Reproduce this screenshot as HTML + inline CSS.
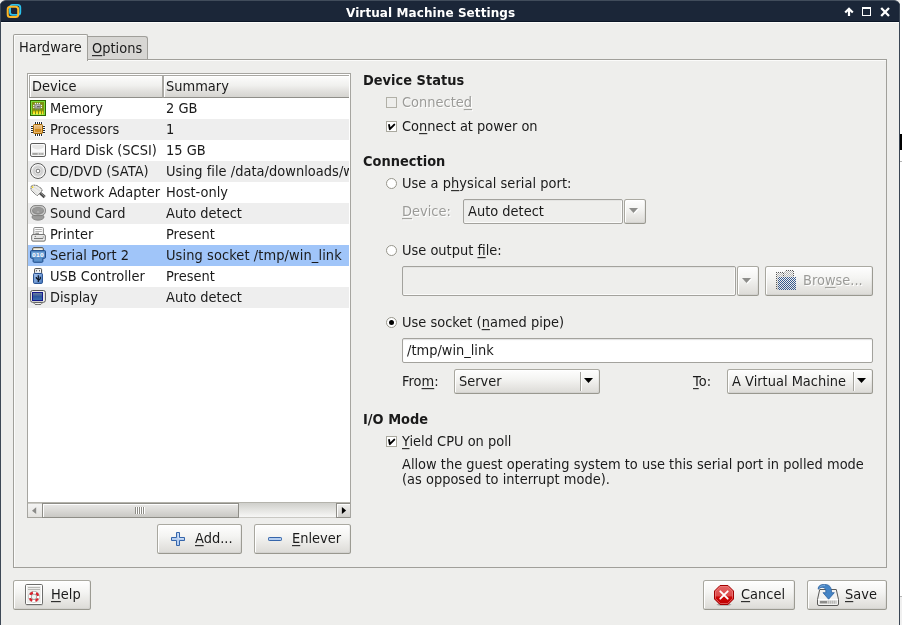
<!DOCTYPE html>
<html><head><meta charset="utf-8"><title>Virtual Machine Settings</title>
<style>
*{box-sizing:border-box;margin:0;padding:0}
html,body{width:902px;height:625px;overflow:hidden;background:#fff}
body{font-family:"DejaVu Sans","Liberation Sans",sans-serif;font-size:13px;color:#1a1a1a;position:relative}
#win{position:absolute;left:0;top:0;width:900px;height:625px;background:#eeeeec;overflow:hidden}
#bl{position:absolute;left:0;top:4px;width:1px;height:621px;background:#3d4856}
#br{position:absolute;left:899px;top:4px;width:1px;height:621px;background:#3a4554}
#title{position:absolute;left:0;top:0;width:900px;height:22px;background:#1b2638;border-top:1px solid #414c5b;border-bottom:1px solid #0a1526;border-radius:6px 6px 0 0}
#hl{position:absolute;left:1px;top:22px;width:898px;height:1px;background:#fcfcfa}
#title .t{position:absolute;left:346px;top:5px;font-size:12px;font-weight:bold;color:#fff;line-height:14px;white-space:nowrap;letter-spacing:.09px;transform:scaleY(1.0001)}
u{text-decoration:underline;text-underline-offset:1.5px;text-decoration-thickness:1px}
.t13{position:absolute;line-height:16px;white-space:nowrap;transform-origin:0 12px;transform:scaleY(1.055)}
.b{font-weight:bold}
.dis{color:#9b9b98;text-shadow:1px 1px 0 #fff}
.btn{position:absolute;border:1px solid;border-color:#aaa9a1 #9c9b93 #99988f #a8a79f;border-radius:2.500px;background:linear-gradient(#fefefe,#f4f4f2 40%,#e8e7e4 70%,#dcdbd7);box-shadow:inset 1px 1px 0 #fff,inset -1px -1px 0 rgba(120,120,110,.08)}
.btn svg{position:absolute}
.sep{position:absolute;top:2px;width:2px;height:19px;background:linear-gradient(90deg,#a3a29c 50%,#fdfdfd 50%)}
#nb{position:absolute;left:13px;top:59px;width:874px;height:509px;border:1px solid #a09f9a;box-shadow:inset 1px 1px 0 #fbfbfa}
#tab1{position:absolute;left:13px;top:34px;width:75px;height:27px;border:1px solid #a09f9a;border-bottom:none;border-radius:2px 2px 0 0;background:#eeeeec;box-shadow:inset 1px 1px 0 #fbfbfa}
#tab2{position:absolute;left:88px;top:36px;width:60px;height:23px;border:1px solid #a09f9a;border-left:none;border-bottom:none;border-radius:0 3px 0 0;background:#d7d6d3}
#list{position:absolute;left:27px;top:73px;width:324px;height:445px;border:1px solid #a6a5a0;border-bottom:none;background:#fff;overflow:hidden}
#list .hd{position:absolute;top:1px;height:23px;border:1px solid #a9a8a3;border-bottom-color:#8f8e89;background:linear-gradient(#fdfdfc,#f0f0ee 45%,#e0dfdc 75%,#d5d4d0);box-shadow:inset 1px 1px 0 #fff}
#list .hd span{position:absolute;left:2px;top:3px;line-height:16px;transform-origin:0 12px;transform:scaleY(1.055)}
.row{position:absolute;left:0;width:322px;height:21px}
.row.g{background:#eeeeee;width:321px}
.row.sel{background:#a0c5f9;width:321px}
.row .n{position:absolute;left:22px;top:3px;line-height:16px;white-space:nowrap;transform-origin:0 12px;transform:scaleY(1.055)}
.row .s{position:absolute;left:138px;top:3px;line-height:16px;transform-origin:0 12px;transform:scaleY(1.055);white-space:nowrap;width:183px;overflow:hidden}
.row svg{position:absolute;left:2px;top:2px}
.cb{position:absolute;width:11px;height:11px;border:1px solid #a9a89e;background:#fff}
.cb svg,.rb i{position:absolute;left:0;top:0}
.rb{position:absolute;width:11px;height:11px;border:1px solid #97968c;border-radius:50%;background:#fff}
.rb i{left:2px;top:2px;width:5px;height:5px;border-radius:50%;background:#000}
.entry{position:absolute;border:1px solid #a3a29d;border-radius:2px;background:#fff;box-shadow:inset 0 1px 1px rgba(0,0,0,.12)}
#sb{position:absolute;left:0;top:428px;width:322px;height:16px;background:linear-gradient(#b4b3ac 0,#b4b3ac 1px,#cfcfcb 1px,#e4e4e1 8px,#f7f7f6 15px,#c9c8c3 15px)}
#sb .l{position:absolute;left:0;top:1px;width:15px;height:15px;background:linear-gradient(#f4f4f3,#e3e2df);border-right:1px solid #8e8d87;border-top:1px solid #c9c8c3;border-bottom:1px solid #a5a49e}
#sb .th{position:absolute;left:14px;top:1px;width:197px;height:15px;border:1px solid #8e8d87;background:linear-gradient(#e9e9e7,#dad9d6 50%,#c9c8c4);box-shadow:inset 1px 1px 0 #fdfdfd}
#sb .r{position:absolute;left:308px;top:1px;width:15px;height:15px;border:1px solid #8e8d87;background:linear-gradient(#f0f0ee,#dddcd9 60%,#d2d1cd);box-shadow:inset 1px 1px 0 #fdfdfd}
#sb svg{position:absolute}
</style></head><body>
<div style="position:absolute;left:900px;top:134px;width:2px;height:16px;background:#000;border-radius:0 0 0 0"></div>
<div style="position:absolute;left:900px;top:596px;width:2px;height:29px;background:#f0f0f0;border-top:1px solid #b5b5b5"></div>
<div style="position:absolute;left:900px;top:161px;width:2px;height:1px;background:#b5b5b5"></div>
<div id="win">
 <div id="title"><span class="t">Virtual Machine Settings</span>
  <svg style="position:absolute;left:5px;top:2px" width="18" height="18" viewBox="0 0 18 18"><rect x="5" y="1.800" width="10.300" height="10.100" rx="2.600" fill="none" stroke="#2cc1ec" stroke-width="1.800"/><rect x="2.700" y="3.700" width="10.500" height="10.400" rx="2.600" fill="none" stroke="#fdb827" stroke-width="2"/><path d="M5 9.500V5" stroke="#2cc1ec" stroke-width="1.800"/></svg>
  <svg style="position:absolute;left:843px;top:3px" width="50" height="14" viewBox="0 0 50 14"><path d="M6 12.100V5M2.200 8.500L6 4.700l3.800 3.800" fill="none" stroke="#fff" stroke-width="2.200" stroke-linejoin="miter"/><path d="M19 3h9v9h-9z" fill="#fff"/><rect x="20" y="5" width="7" height="6" fill="#1b2638"/><path d="M38.200 4l7.800 8M46 4l-7.800 8" stroke="#fff" stroke-width="2.300"/></svg>
 </div><div id="hl"></div>
 <div id="nb"></div>
 <div id="tab2"><span class="t13" style="left:4px;top:4px"><u>O</u>ptions</span></div>
 <div id="tab1"><span class="t13" style="left:5px;top:5px">Har<u>d</u>ware</span></div>
 <div id="list">
  <div class="hd" style="left:1px;width:134px"><span>Device</span></div>
  <div class="hd" style="left:135px;width:186px;border-right:none"><span>Summary</span></div>
  <div class="row" style="top:24px"><svg width="16" height="16" viewBox="0 0 16 16"><defs><linearGradient id="my" x1="0" y1="0" x2="0" y2="1"><stop offset="0" stop-color="#a9a008"/><stop offset=".4" stop-color="#f3de12"/><stop offset="1" stop-color="#fff453"/></linearGradient></defs><rect x=".5" y=".5" width="15" height="15" fill="#7d9210" stroke="#2f6400"/><rect x="1.500" y="1.500" width="13" height="13" fill="none" stroke="#7fe03c"/><path d="M3 10.500h2v4.100h-2zM6 10.500h2v4.100h-2zM9 10.500h2v4.100h-2zM12 10.500h1.300v4.100h-1.300z" fill="url(#my)"/><rect x="4.400" y="4" width="6.400" height="4.800" rx="1" fill="#8f8f8d"/><path d="M5.400 3.500h.01M7.400 3.500h.01M9.400 3.500h.01M3.700 5.500h.01M3.700 7.500h.01M11.500 5.500h.01M11.500 7.500h.01" stroke="#f3f3f3" stroke-width="1.300" stroke-linecap="round"/><path d="M5.400 9.200h.01M7.400 9.200h.01M9.400 9.200h.01" stroke="#777" stroke-width="1.100" stroke-linecap="round"/><rect x="5.600" y="5.200" width="4.300" height="2.400" rx=".5" fill="#c3c3c1"/><rect x="6.800" y="6.200" width="3" height="1" fill="#505050"/></svg><span class="n">Memory</span><span class="s">2 GB</span></div>
  <div class="row g" style="top:45px"><svg width="16" height="16" viewBox="0 0 16 16"><defs><linearGradient id="cpg" x1="0" y1="0" x2="0" y2="1"><stop offset="0" stop-color="#eec589"/><stop offset=".48" stop-color="#e3ad5e"/><stop offset=".52" stop-color="#d08a1c"/><stop offset="1" stop-color="#d9952e"/></linearGradient></defs><path d="M5.500 .6v14.800M7.500 .6v14.800M9.500 .6v14.800M11.500 .6v14.800M.6 5.500h14.800M.6 7.500h14.800M.6 9.500h14.800M.6 11.500h14.800" stroke="#fff" stroke-width="1.900"/><path d="M5.500 1v14M7.500 1v14M9.500 1v14M11.500 1v14M1 5.500h14M1 7.500h14M1 9.500h14M1 11.500h14" stroke="#1f2b38" stroke-width="1"/><rect x="3.500" y="3.500" width="9" height="9" rx="1" fill="url(#cpg)" stroke="#a46600"/><rect x="4.500" y="4.500" width="7" height="7" fill="none" stroke="#f2d4a6" stroke-width=".8" opacity=".7"/></svg><span class="n">Processors</span><span class="s">1</span></div>
  <div class="row" style="top:66px"><svg width="16" height="16" viewBox="0 0 16 16"><rect x=".5" y="1.500" width="15" height="13" rx="1.600" fill="#fafafa" stroke="#5b5b5a"/><path d="M2.300 3H13.700V5.500Q8 9.500 2.300 5.500Z" fill="#e7e7e6"/><rect x="2" y="10.500" width="12" height="2.600" fill="#d2d2d0"/><rect x="2.600" y="11" width="5" height="1.800" fill="#a3a3a1"/><path d="M9.600 11v1.800M11.100 11v1.800M12.600 11v1.800" stroke="#9d9d9b" stroke-width=".8"/></svg><span class="n">Hard Disk (SCSI)</span><span class="s">15 GB</span></div>
  <div class="row g" style="top:87px"><svg width="16" height="16" viewBox="0 0 16 16"><defs><radialGradient id="cdg"><stop offset="0" stop-color="#fff"/><stop offset=".3" stop-color="#f4f4f4"/><stop offset=".5" stop-color="#cdcdcd"/><stop offset=".72" stop-color="#dcdcdc"/><stop offset=".85" stop-color="#fafafa"/><stop offset="1" stop-color="#fff"/></radialGradient></defs><circle cx="8" cy="8" r="7.500" fill="url(#cdg)" stroke="#5c5c5b" stroke-width="1"/><circle cx="8" cy="8" r="1.900" fill="#fff" stroke="#5e5e5d" stroke-width=".9"/></svg><span class="n">CD/DVD (SATA)</span><span class="s" style="letter-spacing:.03px">Using file /data/downloads/w</span></div>
  <div class="row" style="top:108px"><svg width="16" height="16" viewBox="0 0 16 16"><path d="M9.500 8.500L14.700 13.200" stroke="#4a4a49" stroke-width="3"/><path d="M10 8.300L15 12.800" stroke="#8e8e8c" stroke-width="1"/><path d="M1 2.500L3 1L7 1.500L12 5V7L7.500 11.500L6 11L1 6Z" fill="#ececea" stroke="#555554" stroke-width=".9" stroke-dasharray="1.200 .5"/><path d="M2.500 5L7 9.500M4 3L10 7" stroke="#dadad8" stroke-width=".9"/><rect x="1.800" y="2.300" width="1.500" height="1.700" fill="#f2d520"/></svg><span class="n">Network Adapter</span><span class="s">Host-only</span></div>
  <div class="row g" style="top:129px"><svg width="16" height="16" viewBox="0 0 16 16"><ellipse cx="8" cy="12" rx="6" ry="3.200" fill="#9c9c9b" stroke="#7c7c7b" stroke-width=".8"/><rect x=".5" y=".6" width="15" height="10" rx="4.500" fill="#c9c9c8" stroke="#787877" stroke-width=".9"/><ellipse cx="8" cy="5.800" rx="6" ry="3.900" fill="#8b8b8a"/><ellipse cx="8" cy="5.300" rx="5" ry="2.800" fill="#999998"/><path d="M6.500 7.500L8 6L9.500 7.500Z" fill="#bdbdbc"/></svg><span class="n">Sound Card</span><span class="s">Auto detect</span></div>
  <div class="row" style="top:150px"><svg width="16" height="16" viewBox="0 0 16 16"><rect x="3.800" y="1.500" width="9.600" height="8" rx="1" fill="#fbfbfb" stroke="#8a8a89"/><path d="M5.300 3.500H11.800M5.300 5.500H11.800" stroke="#b3b3b2" stroke-width="1"/><path d="M5.300 7.300H9" stroke="#8c8c8b" stroke-width="1.200"/><rect x="1.700" y="8.600" width="13.600" height="6.500" rx="1.300" fill="#f6f6f5" stroke="#676766"/><rect x="3.500" y="10" width="9.500" height="3.800" fill="#e2e2e1"/><rect x="4" y="12" width="9" height="1" fill="#777776"/><circle cx="5.300" cy="10.400" r=".6" fill="#777"/><path d="M13.300 10v2.500" stroke="#999" stroke-width=".8"/></svg><span class="n">Printer</span><span class="s">Present</span></div>
  <div class="row sel" style="top:171px"><svg width="16" height="16" viewBox="0 0 16 16"><rect x="2.700" y=".7" width="10.600" height="3.500" rx="1" fill="#f3f0e4" stroke="#4b4437"/><path d="M1.500 3.600H14.500A1 1 0 0 1 15.500 4.600V10.300A1 1 0 0 1 14.500 11.300H12.900V14.300A1 1 0 0 1 11.900 15.300H4.100A1 1 0 0 1 3.100 14.300V11.300H1.500A1 1 0 0 1 .5 10.300V4.600A1 1 0 0 1 1.500 3.600Z" fill="#4d86c2" stroke="#214d8b" stroke-width="1"/><rect x="1.700" y="4.800" width="12.600" height="5.500" fill="#7eaadb" opacity=".75"/><rect x="4.300" y="11.500" width="7.400" height="2.700" fill="#6a9bd0" opacity=".6"/><text x="8.100" y="9.600" font-family="DejaVu Sans,Liberation Sans,sans-serif" font-weight="bold" font-size="5.400" fill="#f4f8fd" text-anchor="middle" letter-spacing=".25">010</text></svg><span class="n">Serial Port 2</span><span class="s" style="letter-spacing:.09px">Using socket /tmp/win_link</span></div>
  <div class="row" style="top:192px"><svg width="16" height="16" viewBox="0 0 16 16"><defs><linearGradient id="ug" x1="0" y1="0" x2="1" y2="1"><stop offset="0" stop-color="#a9c6ee"/><stop offset="1" stop-color="#4a7cc2"/></linearGradient></defs><rect x="4.600" y=".6" width="7" height="5" rx=".8" fill="#fbfbfb" stroke="#474746"/><rect x="6.100" y="2.100" width="1" height="1.300" fill="#555"/><rect x="9" y="2.100" width="1" height="1.300" fill="#555"/><rect x="3.600" y="5.400" width="8.800" height="10" rx=".8" fill="url(#ug)" stroke="#1f4a8d"/><path d="M8.300 14V7.300M8.300 11.800L6.300 10V9M8.300 12.500l2-1.800V8.800" stroke="#0d1626" stroke-width="1.200" fill="none"/></svg><span class="n">USB Controller</span><span class="s">Present</span></div>
  <div class="row g" style="top:213px"><svg width="16" height="16" viewBox="0 0 16 16"><defs><linearGradient id="dg" x1="0" y1="0" x2="0" y2="1"><stop offset="0" stop-color="#74839f"/><stop offset=".5" stop-color="#2d579c"/><stop offset="1" stop-color="#3a6fb5"/></linearGradient></defs><ellipse cx="8" cy="14.400" rx="3.800" ry="1.300" fill="#f4f4f3" stroke="#555554" stroke-width=".9"/><rect x=".6" y="1.500" width="14.800" height="11.800" rx="2" fill="#f1f1ee" stroke="#555554"/><rect x="2.500" y="3.500" width="10" height="8" fill="url(#dg)" stroke="#141a8c" stroke-width="1"/><path d="M14 4.500v.8M14 6.500v.8M14 8.500v.8" stroke="#cfcfcd" stroke-width=".9"/></svg><span class="n">Display</span><span class="s">Auto detect</span></div>
  <div id="sb"><div class="l"><svg style="left:4px;top:3px" width="5" height="8" viewBox="0 0 5 8"><path d="M4.200 .2V7.100L0 3.650Z" fill="#8b8b88"/></svg></div><div class="th"><svg style="left:92px;top:3px" width="10" height="7" viewBox="0 0 10 7"><path d="M.5 0v7M2.500 0v7M4.500 0v7M6.500 0v7M8.500 0v7" stroke="#8c8b85"/><path d="M1.500 0v7M3.500 0v7M5.500 0v7M7.500 0v7M9.500 0v7" stroke="#fff"/></svg></div><div class="r"><svg style="left:4px;top:3px" width="6" height="8" viewBox="0 0 6 8"><path d="M.9 0V6.900L5.100 3.450Z" fill="#000"/></svg></div></div>
 </div>

 <span class="t13 b" style="left:363px;top:73px">Device Status</span>
 <div class="cb" style="left:386px;top:97px;border-color:#b1b0a7;background:#eeeeec"></div>
 <span class="t13 dis" style="left:402px;top:95px">Connecte<u>d</u></span>
 <div class="cb" style="left:386px;top:121px"><svg width="9" height="9" viewBox="0 0 9 9"><path d="M2.100 3L2.800 7.200L7.300 2.600" fill="none" stroke="#000" stroke-width="1.900" stroke-linecap="round" stroke-linejoin="round"/></svg></div>
 <span class="t13" style="left:402px;top:119px">Co<u>n</u>nect at power on</span>

 <span class="t13 b" style="left:363px;top:154px">Connection</span>
 <div class="rb" style="left:386px;top:178px"></div>
 <span class="t13" style="left:402px;top:176px;letter-spacing:.04px">Use a p<u>h</u>ysical serial port:</span>
 <span class="t13 dis" style="left:402px;top:204px"><u>D</u>evice:</span>
 <div class="entry" style="left:463px;top:199px;width:160px;height:25px;background:#eeeeec;box-shadow:inset -1px -1px 0 #fbfbfa,inset 0 1px 0 rgba(0,0,0,.04)"><span class="t13" style="left:4px;top:4px">Auto detect</span></div>
 <div class="btn" style="left:624px;top:199px;width:22px;height:25px"><svg style="left:4px;top:8px" width="10" height="6" viewBox="0 0 10 6"><path d="M1 1H10L5.500 6Z" fill="#fff"/><path d="M0 0H9L4.500 5Z" fill="#8d8d8a"/></svg></div>

 <div class="rb" style="left:386px;top:245px"></div>
 <span class="t13" style="left:402px;top:243px">Use output <u>f</u>ile:</span>
 <div class="entry" style="left:402px;top:266px;width:334px;height:30px;background:#eeeeec;box-shadow:inset -1px -1px 0 #fbfbfa,inset 0 1px 0 rgba(0,0,0,.04)"></div>
 <div class="btn" style="left:737px;top:266px;width:22px;height:30px"><svg style="left:4px;top:11px" width="10" height="6" viewBox="0 0 10 6"><path d="M1 1H10L5.500 6Z" fill="#fff"/><path d="M0 0H9L4.500 5Z" fill="#8d8d8a"/></svg></div>
 <div class="btn" style="left:765px;top:266px;width:108px;height:30px"><svg style="left:10px;top:3px" width="22" height="22" viewBox="0 0 22 22" shape-rendering="crispEdges"><defs><pattern id="pk" width="2" height="2" patternUnits="userSpaceOnUse"><rect width="1" height="1" fill="#555"/><rect x="1" y="1" width="1" height="1" fill="#555"/></pattern><pattern id="pg" width="2" height="2" patternUnits="userSpaceOnUse"><rect width="1" height="1" fill="#b4b4b2"/><rect x="1" y="1" width="1" height="1" fill="#b4b4b2"/></pattern><pattern id="pb" width="2" height="2" patternUnits="userSpaceOnUse"><rect width="1" height="1" fill="#35598f"/><rect x="1" y="1" width="1" height="1" fill="#35598f"/></pattern></defs><rect x="0" y="2" width="8" height="18" fill="url(#pg)"/><path d="M0 2H8V3H1V20H0Z" fill="url(#pk)"/><rect x="8" y="1" width="10" height="7" fill="url(#pg)"/><path d="M7 6V2L9 0H16L18 2V7H17V3L15.500 1H9.500L8 3V6Z" fill="url(#pk)"/><rect x="2" y="7" width="18" height="13" fill="url(#pb)"/></svg><span class="t13 dis" style="left:37px;top:6px">Bro<u>w</u>se...</span></div>

 <div class="rb" style="left:386px;top:317px"><i></i></div>
 <span class="t13" style="left:402px;top:315px">Use socket (<u>n</u>amed pipe)</span>
 <div class="entry" style="left:402px;top:338px;width:471px;height:25px"><span class="t13" style="left:4px;top:4px">/tmp/win_link</span></div>
 <span class="t13" style="left:402px;top:374px">Fro<u>m</u>:</span>
 <div class="btn" style="left:454px;top:369px;width:146px;height:25px"><span class="t13" style="left:4px;top:4px">Server</span><i class="sep" style="left:125px"></i><svg style="left:129px;top:8px" width="9" height="5" viewBox="0 0 9 5"><path d="M0 0H9L4.500 5Z" fill="#000"/></svg></div>
 <span class="t13" style="left:693px;top:374px"><u>T</u>o:</span>
 <div class="btn" style="left:727px;top:369px;width:146px;height:25px"><span class="t13" style="left:4px;top:4px">A Virtual Machine</span><i class="sep" style="left:125px"></i><svg style="left:129px;top:8px" width="9" height="5" viewBox="0 0 9 5"><path d="M0 0H9L4.500 5Z" fill="#000"/></svg></div>

 <span class="t13 b" style="left:363px;top:412px">I/O Mode</span>
 <div class="cb" style="left:386px;top:436px"><svg width="9" height="9" viewBox="0 0 9 9"><path d="M2.100 3L2.800 7.200L7.300 2.600" fill="none" stroke="#000" stroke-width="1.900" stroke-linecap="round" stroke-linejoin="round"/></svg></div>
 <span class="t13" style="left:402px;top:434px"><u>Y</u>ield CPU on poll</span>
 <span class="t13" style="left:402px;top:457px">Allow the guest operating system to use this serial port in polled mode</span>
 <span class="t13" style="left:402px;top:472px">(as opposed to interrupt mode).</span>

 <div class="btn" style="left:157px;top:524px;width:85px;height:30px"><svg style="left:13px;top:7px" width="14" height="14" viewBox="0 0 14 14"><path d="M5.500 .5H8.500V5.500H13.500V8.500H8.500V13.500H5.500V8.500H.5V5.500H5.500Z" fill="#b5cef0" stroke="#3565aa" stroke-linejoin="round"/><path d="M6.500 1.500H7.500V6.500H12.500" stroke="#d6e4f7" stroke-width=".7" fill="none"/></svg><span class="t13" style="left:37px;top:6px"><u>A</u>dd...</span></div>
 <div class="btn" style="left:254px;top:524px;width:97px;height:30px"><svg style="left:13px;top:12px" width="14" height="4" viewBox="0 0 14 4"><rect x=".5" y=".5" width="13" height="3" rx=".7" fill="#b5cef0" stroke="#3565aa"/></svg><span class="t13" style="left:37px;top:6px"><u>E</u>nlever</span></div>
 <div class="btn" style="left:13px;top:580px;width:78px;height:30px"><svg style="left:11px;top:3px" width="19" height="22" viewBox="0 0 19 22"><rect x="1" y="19.500" width="17" height="2" rx="1" fill="#000" opacity=".18"/><rect x=".5" y=".5" width="17" height="20" rx="1.200" fill="#fff" stroke="#6d6d6b"/><rect x="2" y="2" width="14" height="17" fill="#ededeb"/><path d="M3 3.500H15M3 5.500H15" stroke="#b9b9b6"/><circle cx="9" cy="12.800" r="5.700" fill="#8f8f8c"/><circle cx="9" cy="12.800" r="4.150" fill="none" stroke="#fff" stroke-width="2.500"/><circle cx="9" cy="12.800" r="4.150" fill="none" stroke="#d9232e" stroke-width="2.500" stroke-dasharray="3.260 3.260" stroke-dashoffset="-1.630"/><circle cx="9" cy="12.800" r="2.700" fill="#f4f4f3" stroke="#8f8f8c" stroke-width=".7"/></svg><span class="t13" style="left:37px;top:6px"><u>H</u>elp</span></div>
 <div class="btn" style="left:703px;top:580px;width:92px;height:30px"><svg style="left:10px;top:4px" width="20" height="21" viewBox="0 0 20 21"><defs><linearGradient id="cg" x1="0" y1="0" x2="0" y2="1"><stop offset="0" stop-color="#e46464"/><stop offset=".55" stop-color="#dc4a4a"/><stop offset=".6" stop-color="#cc0606"/><stop offset="1" stop-color="#c00000"/></linearGradient></defs><ellipse cx="10" cy="19.600" rx="7.500" ry="1.200" fill="#000" opacity=".25"/><path d="M6 .5H14L19.500 6V14L14 19.500H6L.5 14V6Z" fill="url(#cg)" stroke="#a20000"/><path d="M6.400 1.500H13.600L18.500 6.400V13.600L13.600 18.500H6.400L1.500 13.600V6.400Z" fill="none" stroke="#f08585" stroke-width=".8" opacity=".8"/><path d="M6.300 6.300L13.700 13.700M13.700 6.300L6.300 13.700" stroke="#fff" stroke-width="1.900" stroke-linecap="round"/></svg><span class="t13" style="left:37px;top:6px"><u>C</u>ancel</span></div>
 <div class="btn" style="left:807px;top:580px;width:80px;height:30px"><svg style="left:9px;top:3px" width="23" height="23" viewBox="0 0 23 23"><path d="M2.700 5.500H19.300L21.500 15.500V20A1.500 1.500 0 0 1 20 21.500H2A1.500 1.500 0 0 1 .5 20V15.500Z" fill="#f3f3f2" stroke="#5a5a58" stroke-linejoin="round"/><path d="M1 15.500H21" stroke="#fff"/><rect x="2.500" y="16.500" width="17.500" height="3.300" fill="#d0d0ce"/><rect x="3" y="17" width="7" height="2.300" fill="#8c8c8a"/><path d="M11.500 16.800v2.800M13.500 16.800v2.800M15.500 16.800v2.800M17.500 16.800v2.800" stroke="#b0b0ae" stroke-width=".8"/><path d="M1.200 5.200C1 1.800 3.800 .4 7.500 .4C12.500 .4 14.600 3.200 14.600 8.700H17.300L11.600 15.200L6 8.700H8.900C8.900 5.200 8 3.400 5.600 3.400C3.600 3.400 2.500 4 1.200 5.200Z" fill="#4585c6" stroke="#2d62a0" stroke-width=".8" stroke-linejoin="round"/><path d="M2.500 3.300C4 1.800 6 1.500 8 1.500" stroke="#8db6e0" stroke-width=".8" fill="none"/></svg><span class="t13" style="left:37px;top:6px"><u>S</u>ave</span></div>
 <div id="bl"></div><div id="br"></div>
</div>
</body></html>
